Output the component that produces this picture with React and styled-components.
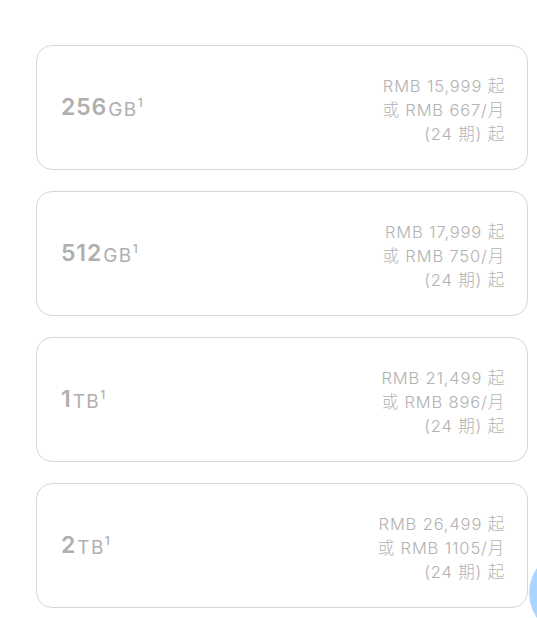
import React from "react";
import styled, { createGlobalStyle } from "styled-components";

const Global = createGlobalStyle`
  html, body { margin: 0; padding: 0; background: #fff; }
  body { font-family: Inter, "Noto Sans CJK SC", sans-serif; overflow: hidden; }
`;

const Page = styled.div`
  padding: 45px 0 0 36px;
  width: 492px;
`;

const List = styled.div`
  display: flex;
  flex-direction: column;
  gap: 21px;
`;

const Card = styled.div`
  box-sizing: border-box;
  height: 125px;
  border: 1px solid #d6d6d6;
  border-radius: 16px;
  display: flex;
  align-items: center;
  justify-content: space-between;
  padding: 0 22px 0 24px;
  color: #afafaf;
`;

const Capacity = styled.div`
  display: flex;
  align-items: flex-start;
  line-height: 1;
`;

const Num = styled.span`
  font-size: 23px;
  font-weight: 600;
  letter-spacing: 0.9px;
`;

const Unit = styled.span`
  font-size: 19px;
  font-weight: 400;
  letter-spacing: 1.4px;
  margin-left: 1px;
  padding-top: 4px;
`;

const Sup = styled.span`
  font-size: 12px;
  font-weight: 500;
  line-height: 1;
  padding-top: 1px;
`;

const Price = styled.div`
  text-align: right;
  font-size: 16.5px;
  font-weight: 300;
  letter-spacing: 0.85px;
  line-height: 24px;
  padding-top: 5px;
  color: #b2b2b2;
`;

const Chat = styled.div`
  position: fixed;
  left: 529px;
  top: 550px;
  width: 86px;
  height: 86px;
  border-radius: 50%;
  background: #a9d5ff;
`;

const items = [
  { n: "256", u: "GB", p: "15,999", m: "667" },
  { n: "512", u: "GB", p: "17,999", m: "750" },
  { n: "1", u: "TB", p: "21,499", m: "896" },
  { n: "2", u: "TB", p: "26,499", m: "1105" },
];

export default function App() {
  return (
    <>
      <Global />
      <Page>
        <List>
          {items.map((it) => (
            <Card key={it.n}>
              <Capacity>
                <Num>{it.n}</Num>
                <Unit>{it.u}</Unit>
                <Sup>1</Sup>
              </Capacity>
              <Price>
                <div>RMB {it.p} 起</div>
                <div>或 RMB {it.m}/月</div>
                <div>(24 期) 起</div>
              </Price>
            </Card>
          ))}
        </List>
      </Page>
      <Chat />
    </>
  );
}
